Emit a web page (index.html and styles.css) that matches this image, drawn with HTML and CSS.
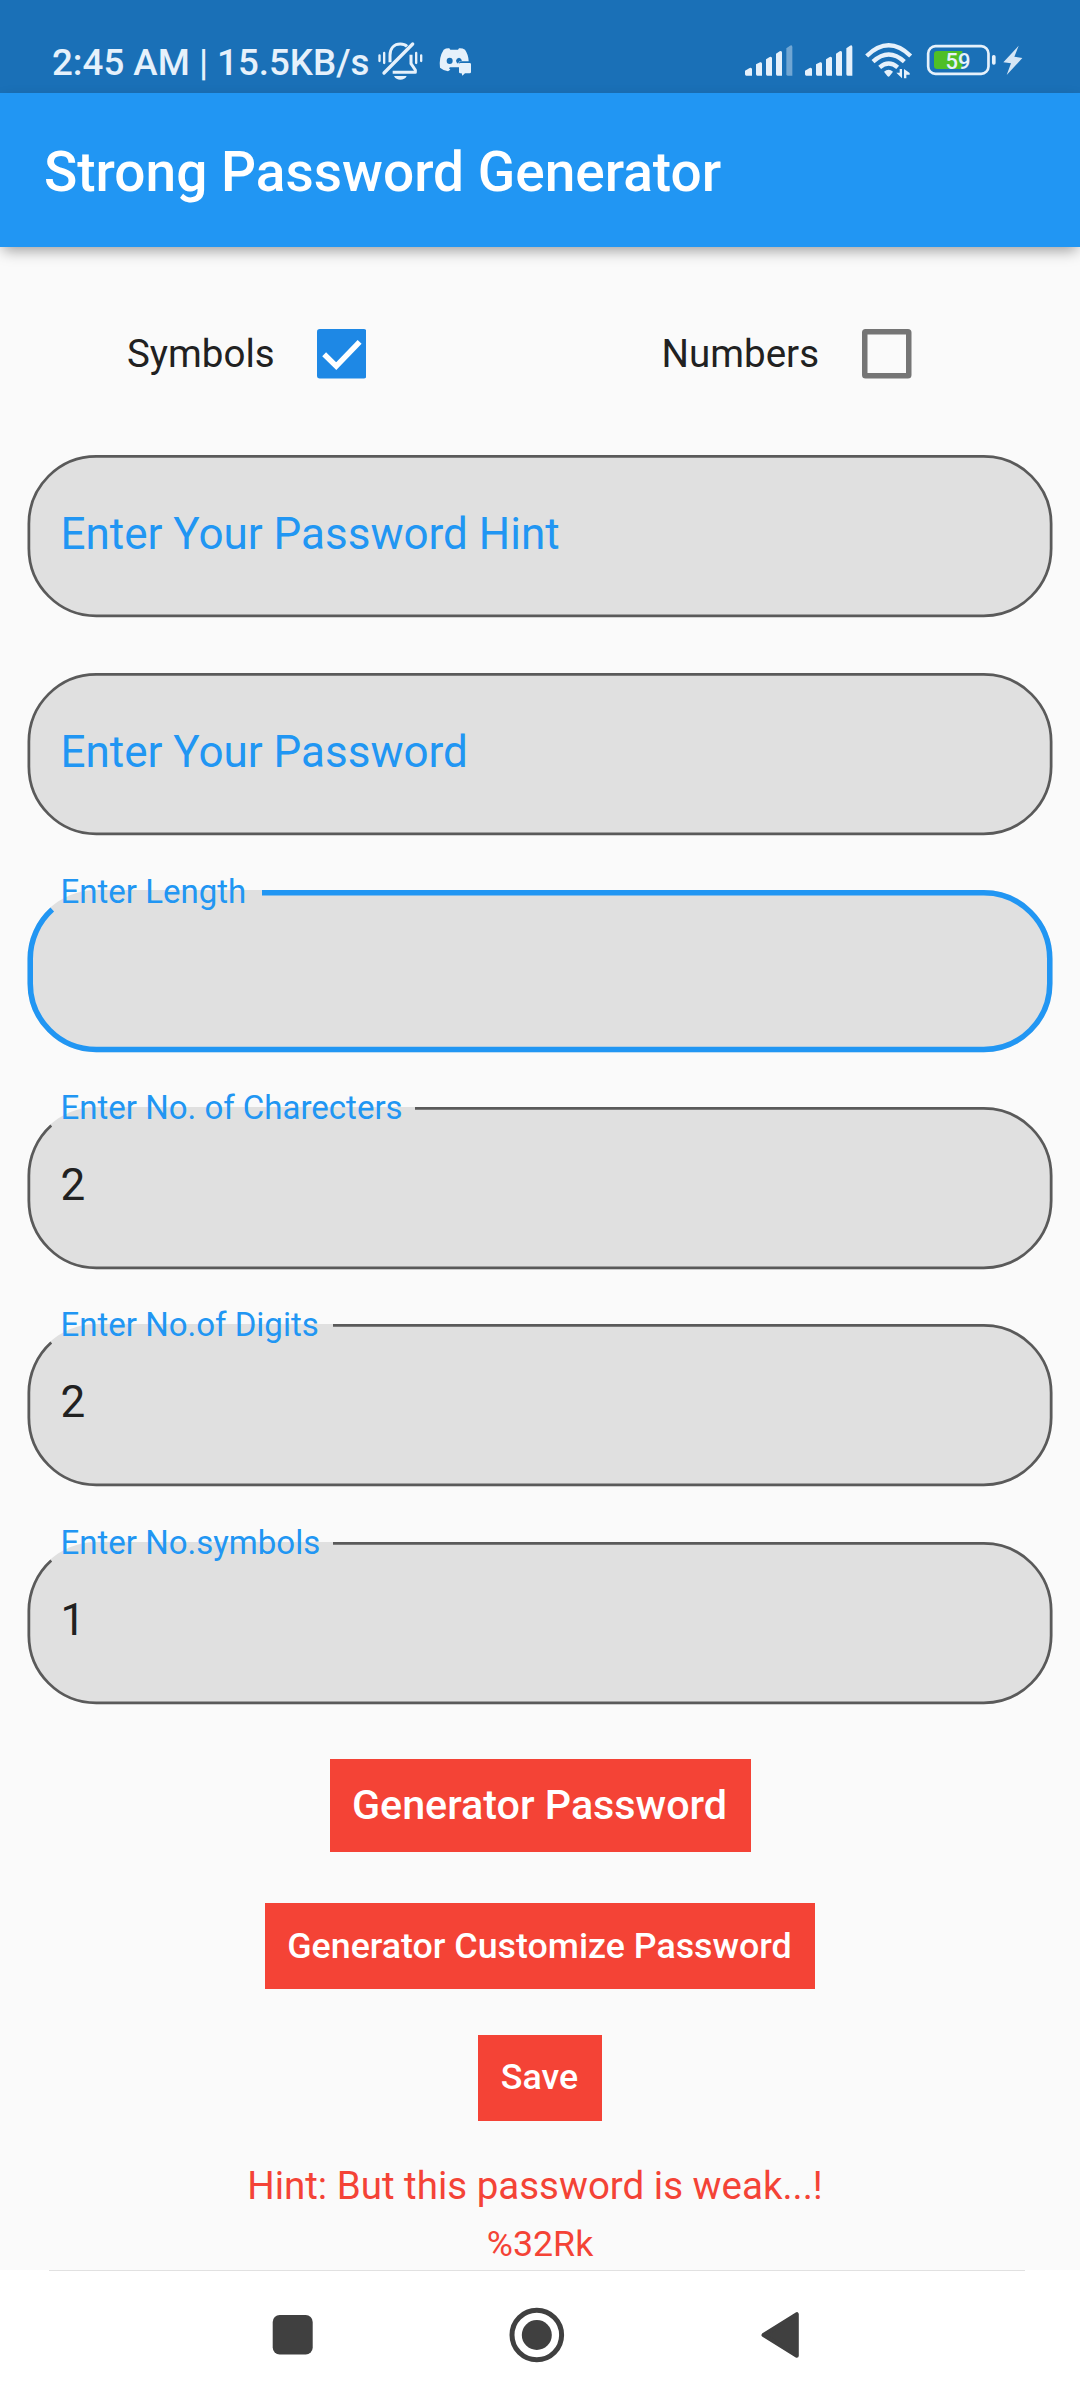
FILE: index.html
```
<!DOCTYPE html>
<html lang="en">
<head>
<meta charset="utf-8">
<title>Strong Password Generator</title>
<link rel="stylesheet" href="styles.css">
</head>
<body>
<div class="status-bar">
  <span class="status-text">2:45 AM | 15.5KB/s</span>
  <svg class="icon bell" viewBox="50 30 140 120" fill="none" stroke="#e6f1fb" stroke-linecap="round">
    <path stroke-width="7" d="M57.500 76V93M71.500 69V99M167.500 69V99M182.500 76V93"/>
    <path stroke-width="9" stroke-linejoin="round" stroke-linecap="butt" d="M89 97V76C89 54 102 42 120 42C128 42 135 44 140 49M152 74V101L165 120V127H97"/>
    <path stroke-width="10" d="M157 42L71 129"/>
    <path fill="#e6f1fb" stroke="none" d="M101 138H139C133 153 107 153 101 138Z"/>
  </svg>
  <svg class="icon discord" viewBox="235 30 105 120" fill="#e6f1fb">
    <path fill-rule="evenodd" d="M252 59Q260 54 269 55L272 59H295L298 55Q308 54 316 59Q327 75 327 94H303Q298 94 298 100V112H271L268 115L272 119L265 124Q252 122 241 113Q237 82 252 59ZM270 83A9 9.500 0 1 0 270 102A9 9.500 0 1 0 270 83ZM298 83Q290 84 289 92Q290 98 295 101L299 94L307 92Q305 84 298 83Z"/>
    <path d="M302 99H330Q334 99 334 103V126Q334 130 330 130H316L308 137L306 130H302Q298 130 298 126V103Q298 99 302 99Z"/>
  </svg>
  <div class="status-right">
    <svg class="icon signal" viewBox="40 30 155 120" fill="#e6f1fb">
      <path d="M46 122L60 114Q67 112 67 118V137H50Q46 137 46 133ZM79 103L91 97Q97 95 97 101V137H83Q79 137 79 133ZM109 88L120 81Q127 79 127 85V137H113Q109 137 109 133ZM139 71L150 64Q157 61 157 68V137H143Q139 137 139 133Z"/>
      <path opacity=".42" d="M170 55L181 47Q188 44 188 51V137H174Q170 137 170 133Z"/>
    </svg>
    <svg class="icon signal" viewBox="220 30 155 120" fill="#e6f1fb">
      <path d="M226 122L240 114Q247 112 247 118V137H230Q226 137 226 133ZM259 103L271 97Q277 95 277 101V137H263Q259 137 259 133ZM289 88L300 81Q307 79 307 85V137H293Q289 137 289 133ZM319 71L330 64Q337 61 337 68V137H323Q319 137 319 133ZM350 55L361 47Q368 44 368 51V137H354Q350 137 350 133Z"/>
    </svg>
    <svg class="icon wifi" viewBox="400 30 155 120" fill="none" stroke="#e6f1fb" stroke-width="13">
      <path d="M411 78Q477 14 543 78M430 95Q477 52 524 95M450 112Q477 89 504 112"/>
      <path fill="#e6f1fb" stroke="none" d="M463 125Q477 114 490 125L480 138Q477 142 473 138ZM500 128H510V117H517V145ZM523 145V117L540 129V134H530V145Z"/>
    </svg>
    <svg class="icon battery" viewBox="585 30 220 120">
      <rect x="594.500" y="48.500" width="181" height="83" rx="22" fill="none" stroke="#e6f1fb" stroke-width="8"/>
      <path fill="#4fbf26" d="M622 63H697V117H622Q612 117 612 107V73Q612 63 622 63Z"/>
      <rect x="786" y="75" width="11" height="29" rx="5" fill="#e6f1fb"/>
      <text class="battery-level" x="684" y="116" text-anchor="middle">59</text>
    </svg>
    <svg class="icon bolt" viewBox="815 30 65 120" fill="#d5e6f5">
      <path d="M865 47L819 97L842 100L829 135L876 84L852 80Z"/>
    </svg>
  </div>
</div>
<header class="app-bar">Strong Password Generator</header>
<main class="content">
  <div class="options">
    <div class="option">Symbols
      <svg class="checkbox" viewBox="0 0 18 18"><rect width="18" height="18" rx="1" fill="#1e88e5"/><path d="M2.600 9.200L7 13.500L15.500 4.700" fill="none" stroke="#fff" stroke-width="2"/></svg>
    </div>
    <div class="option option-numbers">Numbers
      <svg class="checkbox" viewBox="0 0 18 18"><rect x="1" y="1" width="16" height="16" rx=".3" fill="none" stroke="#757575" stroke-width="2"/></svg>
    </div>
  </div>
  <div class="fields">
    <div class="field">
      <svg class="outline" viewBox="-.5 0 1026 162.250"><rect x="1.375" y="1.375" width="1022.250" height="159.500" rx="67.375"/></svg>
      <span class="hint">Enter Your Password Hint</span>
    </div>
    <div class="field">
      <svg class="outline" viewBox="-.5 0 1026 162.250"><rect x="1.375" y="1.375" width="1022.250" height="159.500" rx="67.375"/></svg>
      <span class="hint">Enter Your Password</span>
    </div>
    <div class="field focused">
      <svg class="outline" viewBox="-.5 0 1026 162.250"><rect class="fill" width="1025" height="162.250" rx="68.750"/><path d="M234.500 2.750H956.250A66 66 0 0 1 1022.250 68.750V93.500A66 66 0 0 1 956.250 159.500H68.750A66 66 0 0 1 2.750 93.500V68.750A66 66 0 0 1 24.750 19.570"/></svg>
      <span class="label">Enter Length</span>
    </div>
    <div class="field">
      <svg class="outline" viewBox="-.5 0 1026 162.250"><rect class="fill" width="1025" height="162.250" rx="68.750"/><path d="M387.500 1.375H956.250A67.375 67.375 0 0 1 1023.625 68.750V93.500A67.375 67.375 0 0 1 956.250 160.875H68.750A67.375 67.375 0 0 1 1.375 93.500V68.750A67.375 67.375 0 0 1 23.750 18.600"/></svg>
      <span class="label">Enter No. of Charecters</span>
      <span class="value">2</span>
    </div>
    <div class="field">
      <svg class="outline" viewBox="-.5 0 1026 162.250"><rect class="fill" width="1025" height="162.250" rx="68.750"/><path d="M305.500 1.375H956.250A67.375 67.375 0 0 1 1023.625 68.750V93.500A67.375 67.375 0 0 1 956.250 160.875H68.750A67.375 67.375 0 0 1 1.375 93.500V68.750A67.375 67.375 0 0 1 23.750 18.600"/></svg>
      <span class="label">Enter No.of Digits</span>
      <span class="value">2</span>
    </div>
    <div class="field">
      <svg class="outline" viewBox="-.5 0 1026 162.250"><rect class="fill" width="1025" height="162.250" rx="68.750"/><path d="M305.500 1.375H956.250A67.375 67.375 0 0 1 1023.625 68.750V93.500A67.375 67.375 0 0 1 956.250 160.875H68.750A67.375 67.375 0 0 1 1.375 93.500V68.750A67.375 67.375 0 0 1 23.750 18.600"/></svg>
      <span class="label">Enter No.symbols</span>
      <span class="value">1</span>
    </div>
  </div>
  <button class="button button-generate">Generator Password</button>
  <button class="button button-custom">Generator Customize Password</button>
  <button class="button button-save">Save</button>
  <p class="strength">Hint: But this password is weak...!</p>
  <p class="password">%32Rk</p>
</main>
<nav class="nav-bar">
  <svg class="nav-icons" viewBox="0 0 1080 129" fill="#404040">
    <rect x="49" y="0" width="976" height="1" fill="#e1e1e1"/>
    <rect x="272.700" y="45" width="40" height="39.500" rx="7"/>
    <circle cx="536.800" cy="65" r="24.800" fill="none" stroke="#404040" stroke-width="5"/>
    <circle cx="536.800" cy="65" r="15"/>
    <path stroke="#404040" stroke-width="4" stroke-linejoin="round" d="M763.500 65L796.800 44.200V85.800Z"/>
  </svg>
</nav>
</body>
</html>
```
FILE: styles.css
```
* {
  box-sizing: border-box;
}

body {
  margin: 0;
  width: 1080px;
  height: 2400px;
  display: flex;
  flex-direction: column;
  overflow: hidden;
  background: #fafafa;
  color: #212121;
  font-family: Roboto, "Liberation Sans", sans-serif;
}

svg {
  display: block;
  flex: none;
}

.status-bar {
  display: flex;
  flex: none;
  align-items: flex-start;
  height: 93px;
  padding: 40px 56.7px 0 52px;
  background: #1a70b7;
  color: #e6f1fb;
}

.status-text {
  width: 324.7px;
  font-size: 36.7px;
  font-weight: 500;
  line-height: 45px;
  white-space: nowrap;
}

.icon {
  height: 40px;
}

.bell {
  width: 46.7px;
}

.discord {
  width: 35px;
  margin-left: 15px;
}

.status-right {
  display: flex;
  margin-left: auto;
}

.signal {
  width: 51.7px;
  margin-right: 8.3px;
}

.wifi {
  width: 51.7px;
}

.battery {
  width: 73.3px;
  margin: 0 3.3px 0 10px;
}

.battery-level {
  font-size: 66px;
  font-weight: 500;
  fill: #e6f1fb;
}

.bolt {
  width: 21.7px;
}

.app-bar {
  position: relative;
  flex: none;
  height: 154px;
  padding: 2px 44px 0;
  background: #2196f3;
  box-shadow: 0 6px 14px -3px rgba(0, 0, 0, .4);
  color: #fff;
  font-size: 55px;
  font-weight: 500;
  line-height: 154px;
}

.content {
  flex: 1;
  min-height: 0;
  display: flex;
  flex-direction: column;
  align-items: center;
  padding-top: 82px;
}

.options {
  flex: none;
  display: grid;
  grid-template-columns: 1fr 1fr;
  width: 100%;
  height: 49.5px;
  font-size: 38.5px;
  line-height: 50px;
}

.option {
  display: flex;
  gap: 42.1px;
  padding-left: 127px;
}

.option-numbers {
  gap: 43px;
  padding-left: 121.6px;
}

.checkbox {
  width: 49.5px;
  height: 49.5px;
}

.fields {
  display: flex;
  flex: none;
  flex-direction: column;
  gap: 55px;
  width: 1026px;
  margin: 76.9px 0 55px;
}

.field {
  position: relative;
  height: 162.25px;
  padding-left: 33.5px;
  font-size: 44px;
}

.outline {
  position: absolute;
  inset: 0;
  width: 1026px;
  height: 162.25px;
  overflow: visible;
  fill: #e0e0e0;
  stroke: #5a5a5a;
  stroke-width: 2.75;
}

.outline .fill {
  stroke: none;
}

.outline path {
  fill: none;
}

.focused .outline {
  stroke: #2196f3;
  stroke-width: 5.5;
}

.hint,
.value {
  position: relative;
  display: block;
}

.hint {
  color: #2196f3;
  line-height: 158px;
}

.value {
  line-height: 156px;
}

.label {
  position: absolute;
  top: -20px;
  left: 33.5px;
  color: #2196f3;
  font-size: 33px;
  line-height: 41px;
}

.focused .label {
  top: -19px;
}

.button {
  flex: none;
  height: 85.4px;
  padding: 0 1px 0 0;
  border: 0;
  background: #f44336;
  color: #fff;
  font: 500 35.75px/85px Roboto, "Liberation Sans", sans-serif;
}

.button-generate {
  width: 421px;
  height: 93.5px;
  font-size: 41.25px;
  line-height: 93px;
}

.button-custom {
  width: 550.3px;
  margin: 51px 0 46.5px;
}

.button-save {
  width: 124px;
}

.strength,
.password {
  margin: 0;
  color: #f44336;
  white-space: nowrap;
}

.strength {
  margin-top: 35px;
  padding-right: 10px;
  font-size: 38.5px;
  line-height: 60px;
}

.password {
  margin-top: 3.7px;
  font-size: 35.75px;
  line-height: 50px;
}

.nav-bar {
  flex: none;
  height: 130px;
  background: #fff;
}

.nav-icons {
  width: 1080px;
  height: 129px;
}
```
